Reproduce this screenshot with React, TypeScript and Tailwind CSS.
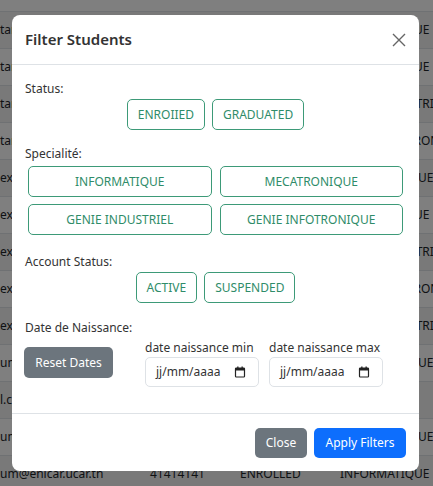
import React from "react";

const rows: { l: string; t: string; s: string; r: string }[] = [
  { l: "tarek@enicar.ucar.tn", t: "41414141", s: "ENROLLED", r: "INFORMATIQUE" },
  { l: "tarek@enicar.ucar.tn", t: "41414141", s: "ENROLLED", r: "INFORMATIQUE" },
  { l: "tarek@enicar.ucar.tn", t: "41414141", s: "ENROLLED", r: "GENIE INDUSTRIEL" },
  { l: "tarek@enicar.ucar.tn", t: "41414141", s: "ENROLLED", r: "GENIE INFOTRONIQUE" },
  { l: "example@enicar.ucar.tn", t: "41414141", s: "ENROLLED", r: "MECATRONIQUE" },
  { l: "example@enicar.ucar.tn", t: "41414141", s: "ENROLLED", r: "INFORMATIQUE" },
  { l: "example@enicar.ucar.tn", t: "41414141", s: "ENROLLED", r: "GENIE INDUSTRIEL" },
  { l: "example@enicar.ucar.tn", t: "41414141", s: "ENROLLED", r: "GENIE INFOTRONIQUE" },
  { l: "example@enicar.ucar.tn", t: "41414141", s: "ENROLLED", r: "GENIE INDUSTRIEL" },
  { l: "um@enicar.ucar.tn", t: "41414141", s: "ENROLLED", r: "MECATRONIQUE" },
  { l: "l.com", t: "41414141", s: "ENROLLED", r: "" },
  { l: "um@enicar.ucar.tn", t: "41414141", s: "ENROLLED", r: "MECATRONIQUE" },
  { l: "um@enicar.ucar.tn", t: "41414141", s: "ENROLLED", r: "INFORMATIQUE" },
];

function OutlineBtn({ children, className = "" }: { children: React.ReactNode; className?: string }) {
  return (
    <div
      className={
        "flex items-center justify-center h-[31px] px-[10px] rounded-[5px] border border-[#3d9a78] text-[#2f8c69] text-[12px] " +
        className
      }
    >
      {children}
    </div>
  );
}

function Calendar() {
  return (
    <svg width="12" height="12" viewBox="0 0 12 12" fill="none">
      <rect x="1.5" y="2" width="9" height="9" rx="0.8" stroke="#222" strokeWidth="1.2" />
      <rect x="1.5" y="2" width="9" height="2.5" fill="#222" />
      <rect x="3.2" y="0.5" width="1.3" height="2" fill="#222" />
      <rect x="7.5" y="0.5" width="1.3" height="2" fill="#222" />
    </svg>
  );
}

function DateField({ label }: { label: string }) {
  return (
    <div className="flex flex-col w-[114px]">
      <div className="text-[12px] leading-[19px] text-[#333] whitespace-nowrap">{label}</div>
      <div className="h-[30px] rounded-[5px] border border-[#dee2e6] flex items-center justify-between pl-[10px] pr-[12px]">
        <span className="text-[12px] text-[#333]">jj/mm/aaaa</span>
        <Calendar />
      </div>
    </div>
  );
}

export default function App() {
  return (
    <div
      className="relative w-[433px] h-[486px] overflow-hidden bg-white text-[#212529]"
      style={{ fontFamily: '"Noto Sans", "Open Sans", sans-serif' }}
    >
      {/* background table */}
      <div className="-mt-[25px] text-[12px]">
        <div className="flex h-[37px] items-center border-b border-[#dee2e6] font-semibold">
          <div className="w-[150px] shrink-0" />
          <div className="w-[90px] shrink-0">Telephone</div>
          <div className="w-[100px] shrink-0">Status</div>
          <div className="shrink-0">Specialite</div>
        </div>
        {rows.map((r, i) => (
          <div
            key={i}
            className={
              "flex h-[37px] items-center border-b border-[#dee2e6] whitespace-nowrap " +
              (i % 2 === 0 ? "bg-[#f2f2f2]" : "bg-white")
            }
          >
            <div className="w-[150px] shrink-0 overflow-hidden">{r.l}</div>
            <div className="w-[90px] shrink-0">{r.t}</div>
            <div className="w-[100px] shrink-0">{r.s}</div>
            <div className="shrink-0">{r.r}</div>
          </div>
        ))}
      </div>

      {/* backdrop */}
      <div className="absolute inset-0 bg-black/50" />

      {/* modal */}
      <div className="absolute left-[12px] top-[15px] w-[407px] h-[456px] bg-white rounded-[8px] flex flex-col">
        <div className="h-[50px] flex items-center justify-between pl-[13px] pr-[13px] border-b border-[#dee2e6]">
          <div className="text-[15px] font-semibold text-[#333]">Filter Students</div>
          <svg width="14" height="14" viewBox="0 0 14 14">
            <path d="M1 1 L13 13 M13 1 L1 13" stroke="#666" strokeWidth="1.4" />
          </svg>
        </div>

        <div className="flex-1 px-[13px] pt-[14px] flex flex-col">
          <div className="text-[12px] leading-[19px] text-[#333]">Status:</div>
          <div className="flex justify-center gap-[7px] mt-[1px]">
            <OutlineBtn>ENROIIED</OutlineBtn>
            <OutlineBtn>GRADUATED</OutlineBtn>
          </div>

          <div className="text-[12px] leading-[19px] text-[#333] mt-[14px]">Specialité:</div>
          <div className="grid grid-cols-2 gap-x-[8px] gap-y-[7px] px-[3px] mt-[3px]">
            <OutlineBtn>INFORMATIQUE</OutlineBtn>
            <OutlineBtn>MECATRONIQUE</OutlineBtn>
            <OutlineBtn>GENIE INDUSTRIEL</OutlineBtn>
            <OutlineBtn>GENIE INFOTRONIQUE</OutlineBtn>
          </div>

          <div className="text-[12px] leading-[19px] text-[#333] mt-[17px]">Account Status:</div>
          <div className="flex justify-center gap-[7px] mt-[1px]">
            <OutlineBtn className="h-[30px]">ACTIVE</OutlineBtn>
            <OutlineBtn className="h-[30px]">SUSPENDED</OutlineBtn>
          </div>

          <div className="text-[12px] leading-[19px] text-[#333] mt-[15px]">Date de Naissance:</div>
          <div className="flex items-center mt-[1px]">
            <div className="h-[31px] w-[89px] -ml-[1px] rounded-[5px] bg-[#6c757d] text-white text-[12px] flex items-center justify-center">
              Reset Dates
            </div>
            <div className="flex gap-[10px] ml-[32px]">
              <DateField label="date naissance min" />
              <DateField label="date naissance max" />
            </div>
          </div>
        </div>

        <div className="h-[58px] border-t border-[#dee2e6] flex items-center justify-end gap-[7px] pr-[13px]">
          <div className="h-[30px] w-[52px] rounded-[5px] bg-[#6c757d] text-white text-[12px] flex items-center justify-center">
            Close
          </div>
          <div className="h-[30px] w-[92px] rounded-[5px] bg-[#0d6efd] text-white text-[12px] flex items-center justify-center">
            Apply Filters
          </div>
        </div>
      </div>
    </div>
  );
}
